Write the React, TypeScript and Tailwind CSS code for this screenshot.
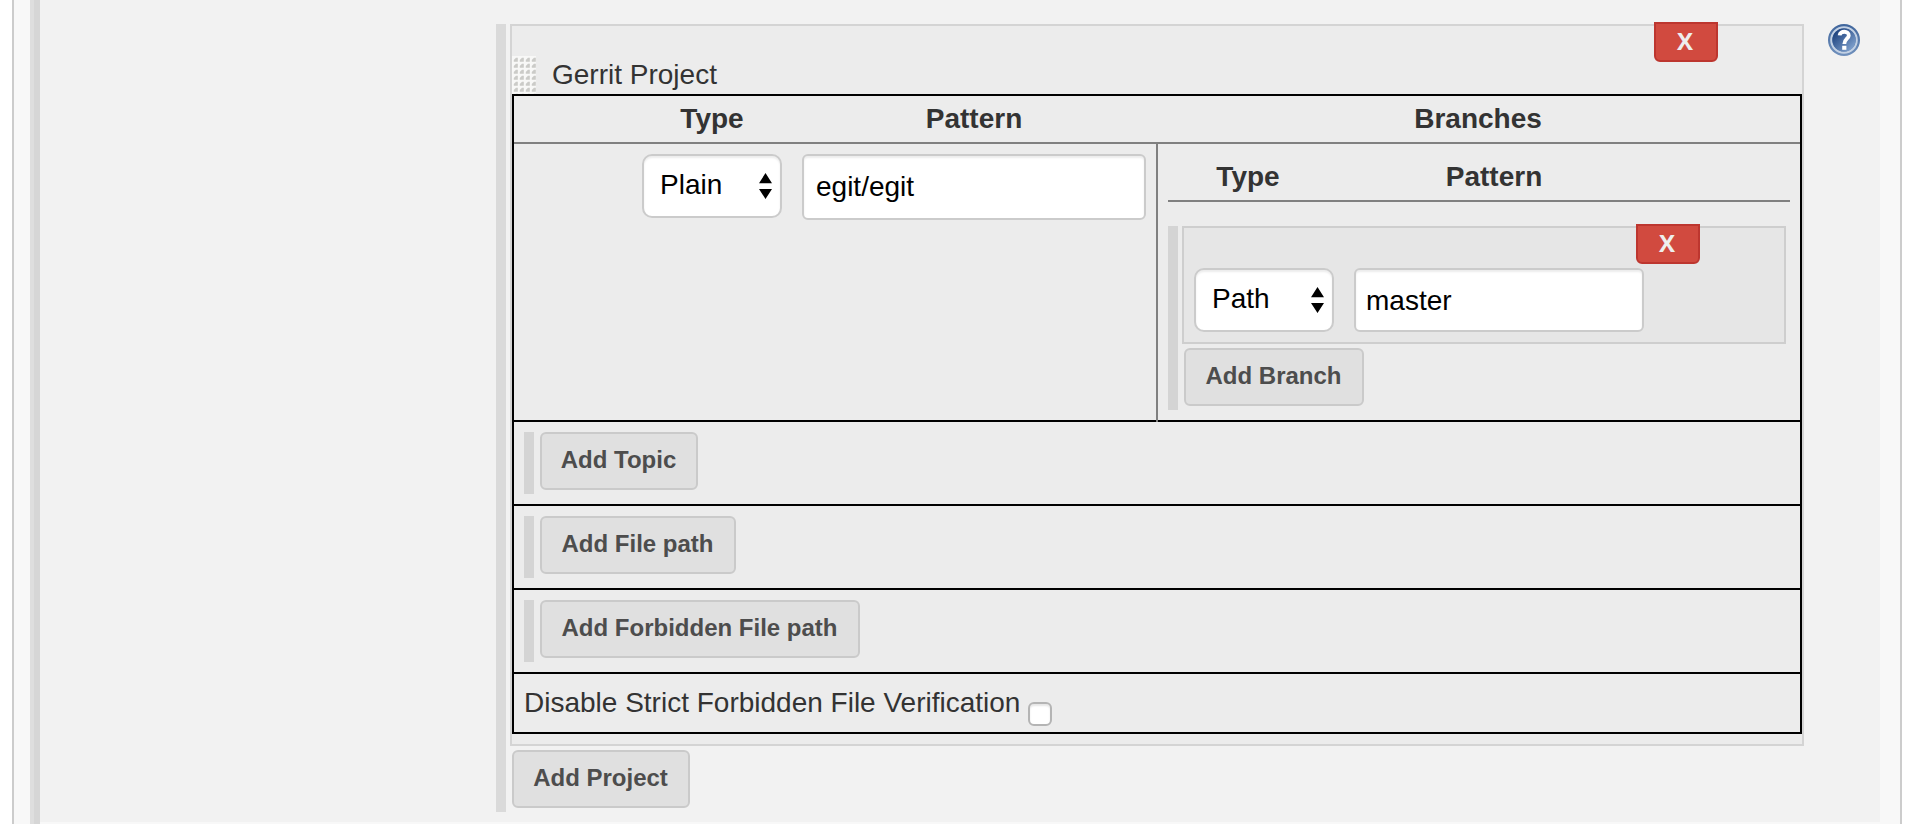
import type { ReactNode } from "react";

function Select({ value }: { value: string }) {
  return (
    <div className="relative flex h-[64px] w-[140px] shrink-0 items-start rounded-[10px] border-2 border-[#cbcbcb] bg-white pl-4 text-black shadow-[inset_0_2px_2px_rgba(0,0,0,0.075)]">
      <span className="mt-[13px] leading-[32px]">{value}</span>
      <svg className="absolute top-[17px] left-[115px]" width="13" height="26" viewBox="0 0 13 26">
        <path d="M6.5 0L13 10.3H0zM0 16h13L6.5 26z" fill="#000" />
      </svg>
    </div>
  );
}

function Field({ value, className }: { value: string; className: string }) {
  return (
    <input
      type="text"
      defaultValue={value}
      className={`shrink-0 rounded-[6px] border-2 border-[#cbcbcb] bg-white text-black shadow-[inset_0_2px_2px_rgba(0,0,0,0.075)] outline-none ${className}`}
    />
  );
}

function AddButton({ children, className }: { children: ReactNode; className: string }) {
  return (
    <button
      className={`block h-[58px] shrink-0 rounded-[6px] border-2 border-[#cacaca] bg-[#e0e0e0] pr-px pb-[3px] text-center text-[24px] font-bold whitespace-nowrap text-[#4d4d4d] ${className}`}
    >
      {children}
    </button>
  );
}

function DeleteButton({ className }: { className: string }) {
  return (
    <button
      className={`absolute h-[40px] w-[64px] rounded-b-[6px] border-2 border-[#bd362f] bg-[#d14a3f] pr-[2px] pb-[2px] text-center font-['Open_Sans',sans-serif] text-[24px] leading-[34px] font-bold text-[#eeeeee] ${className}`}
    >
      X
    </button>
  );
}

function Grip() {
  return (
    <svg width="24" height="38" viewBox="0 0 24 38" className="shrink-0">
      <defs>
        <pattern id="grip" width="6" height="6" patternUnits="userSpaceOnUse">
          <rect width="6" height="6" fill="#f8f8f7" />
          <path d="M1.8 5.8V4L4 1.8H5.8V5.8z" fill="#cbcbc8" />
        </pattern>
      </defs>
      <rect width="24" height="38" fill="url(#grip)" />
    </svg>
  );
}

function HelpIcon() {
  return (
    <svg width="32" height="32" viewBox="0 0 32 32" className="mt-6 ml-6 shrink-0">
      <defs>
        <linearGradient id="help" x1="0" y1="0" x2="1" y2="1">
          <stop offset="0.15" stopColor="#1f4480" />
          <stop offset="1" stopColor="#8fb0da" />
        </linearGradient>
        <linearGradient id="rim" x1="0" y1="0" x2="0" y2="1">
          <stop offset="0" stopColor="#3f659c" />
          <stop offset="1" stopColor="#7191bd" />
        </linearGradient>
      </defs>
      <circle cx="16" cy="16" r="16" fill="url(#rim)" />
      <circle cx="16" cy="16" r="12.8" fill="none" stroke="#c3d1e4" strokeWidth="2" />
      <circle cx="16" cy="16" r="11.6" fill="url(#help)" />
      <path d="M11.6 11.4C12 6.4 21 6.6 20.8 11.6C20.6 14.8 16.3 15 16.3 20" fill="none" stroke="#fff" strokeWidth="3.8" />
      <rect x="14.2" y="21.8" width="4.2" height="4" fill="#fff" />
    </svg>
  );
}

function AddRow({ label, className }: { label: string; className: string }) {
  return (
    <div className="flex h-[84px] gap-[6px] border-b-2 border-black px-[10px] pt-[10px]">
      <div className="h-[62px] w-[10px] bg-[#d4d4d4]" />
      <AddButton className={className}>{label}</AddButton>
    </div>
  );
}

function Branches() {
  return (
    <div className="h-[276px] w-[642px] pl-[10px]">
      <div className="flex h-[58px] w-[622px] border-b-2 border-[#808080] pt-[17px] leading-[32px] font-bold">
        <div className="w-[160px] text-center">Type</div>
        <div className="w-[332px] text-center">Pattern</div>
      </div>
      <div className="mt-6 flex h-[184px] gap-1">
        <div className="w-[10px] bg-[#d4d4d4]" />
        <div>
          <div className="relative flex h-[118px] w-[604px] gap-5 border-2 border-[#cecece] bg-[#e6e6e6] pt-[40px] pl-[10px]">
            <DeleteButton className="top-[-4px] left-[452px]" />
            <Select value="Path" />
            <Field value="master" className="h-[64px] w-[290px] px-[10px] pt-[2px]" />
          </div>
          <AddButton className="mt-1 ml-[2px] w-[180px]">Add Branch</AddButton>
        </div>
      </div>
    </div>
  );
}

function ProjectTable() {
  return (
    <div className="w-[1290px] border-2 border-black">
      <div className="flex h-[48px] border-b-2 border-[#808080] pt-[7px] leading-[32px] font-bold">
        <div className="w-[118px]" />
        <div className="w-[160px] text-center">Type</div>
        <div className="w-[364px] text-center">Pattern</div>
        <div className="w-[644px] text-center">Branches</div>
      </div>
      <div className="flex h-[278px] border-b-2 border-black">
        <div className="-mb-[2px] flex w-[644px] gap-5 border-r-2 border-[#808080] pt-[10px] pl-[128px]">
          <Select value="Plain" />
          <Field value="egit/egit" className="h-[66px] w-[344px] px-3" />
        </div>
        <Branches />
      </div>
      <AddRow label="Add Topic" className="w-[158px]" />
      <AddRow label="Add File path" className="w-[196px]" />
      <AddRow label="Add Forbidden File path" className="w-[320px]" />
      <label className="flex h-[58px] pt-[13px] pl-[10px] leading-[32px] whitespace-nowrap">
        <span className="w-[504px]">Disable Strict Forbidden File Verification</span>
        <input
          type="checkbox"
          className="mt-[15px] h-[24px] w-[24px] appearance-none rounded-[6px] border-2 border-[#b4b4b4] bg-white shadow-[inset_0_2px_2px_rgba(0,0,0,0.1)]"
        />
      </label>
    </div>
  );
}

export default function App() {
  return (
    <div className="h-[824px] w-[1918px] overflow-hidden bg-white pl-3 font-['Liberation_Sans',Arial,sans-serif] text-[28px] text-[#333333]">
      <div className="flex h-full w-[1890px] border-x-2 border-[#cccccc] bg-[#f8f8f8] pl-4">
        <div className="w-1 bg-[#dedede]" />
        <div className="w-[6px] bg-[#d6d6d6]" />
        <div className="flex h-[822px] w-[1840px] bg-[#f2f2f2] pl-[456px]">
          <div className="mt-6 h-[788px] w-[10px] bg-[#dadada]" />
          <div className="mt-6 ml-1 w-[1294px]">
            <div className="relative h-[722px] border-2 border-[#d4d4d4] bg-[#ececec] pt-[30px]">
              <DeleteButton className="top-[-4px] left-[1142px]" />
              <div className="flex h-[38px] gap-4">
                <Grip />
                <span className="mt-[3px] leading-[32px]">Gerrit Project</span>
              </div>
              <ProjectTable />
            </div>
            <AddButton className="mt-1 ml-[2px] w-[178px]">Add Project</AddButton>
          </div>
          <HelpIcon />
        </div>
      </div>
    </div>
  );
}
